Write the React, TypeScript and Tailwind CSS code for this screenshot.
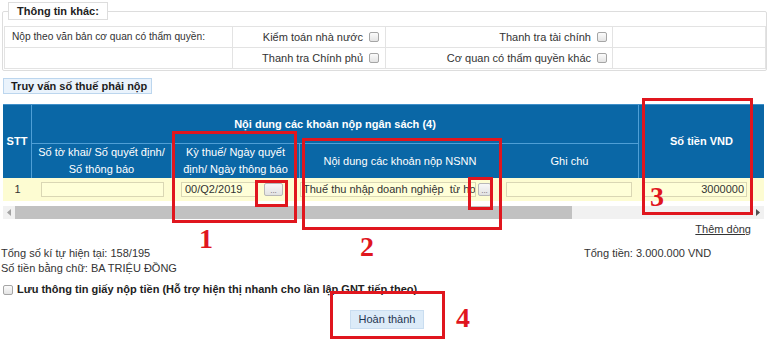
import React from 'react';

const Check = () => (
    <span className="inline-block w-[10px] h-[10px] shrink-0 rounded-[2px] border border-[#a5a5a5] bg-gradient-to-b from-[#fbfbfb] to-[#e4e4e4]" />
);

const DotsButton = ({ w }: { w: string }) => (
    <span className={`${w} h-[13px] shrink-0 rounded-[2px] border border-[#b8b8b8] bg-gradient-to-b from-[#f8f8f8] to-[#e2e2e2] flex items-end justify-center text-[8px] leading-[9px] text-[#666]`}>
        ...
    </span>
);

// annotation boxes drawn over the form
const RedBox = ({ className }: { className: string }) => (
    <div className={`absolute border-[3px] border-[#e0161e] ${className}`} />
);

const RedNum = ({ n, className }: { n: string; className: string }) => (
    <div className={`absolute font-['Liberation_Serif',serif] font-bold text-[28px] leading-none text-[#e0161e] ${className}`}>
        {n}
    </div>
);

export default function App() {
    return (
        <div className="relative w-[768px] h-[348px] overflow-hidden bg-white font-['Liberation_Sans',Arial,sans-serif] text-[11px] text-[#333]">
            {/* Thông tin khác */}
            <fieldset className="mt-[2px] mx-[2px] border border-[#dddddd] rounded-[2px] pb-[1px]">
                <legend className="ml-[5px] px-[8px] border border-[#dddddd] bg-white font-bold leading-[16px] text-[#222]">
                    Thông tin khác:
                </legend>
                <div className="mt-[6px] ml-[1px] grid grid-cols-[228px_153px_227px_153px] grid-rows-[21px_21px] border-t border-l border-[#e3e3e3]">
                    <div className="flex items-center pl-[7px] text-[10.2px] border-r border-b border-[#e3e3e3]">
                        Nộp theo văn bản cơ quan có thẩm quyền:
                    </div>
                    <div className="flex items-center justify-end gap-[6px] pr-[6px] border-r border-b border-[#e3e3e3]">
                        Kiểm toán nhà nước <Check />
                    </div>
                    <div className="flex items-center justify-end gap-[6px] pr-[5px] border-r border-b border-[#e3e3e3]">
                        Thanh tra tài chính <Check />
                    </div>
                    <div className="border-r border-b border-[#e3e3e3]" />
                    <div className="border-r border-b border-[#e3e3e3]" />
                    <div className="flex items-center justify-end gap-[6px] pr-[6px] border-r border-b border-[#e3e3e3]">
                        Thanh tra Chính phủ <Check />
                    </div>
                    <div className="flex items-center justify-end gap-[6px] pr-[5px] border-r border-b border-[#e3e3e3]">
                        Cơ quan có thẩm quyền khác <Check />
                    </div>
                    <div className="border-r border-b border-[#e3e3e3]" />
                </div>
            </fieldset>

            <button className="mt-[7px] ml-[3px] w-[149px] h-[16px] flex items-center pl-[7px] border border-[#bcd6ee] bg-[#eaf3fc] font-bold text-[#1c1c1c]">
                Truy vấn số thuế phải nộp
            </button>

            {/* Bảng khoản nộp */}
            <div className="mt-[10px] ml-[3px] w-[761px]">
                <div className="grid grid-cols-[29px_140px_128px_201px_138px_125px] grid-rows-[39px_34px] bg-[#0a67a6] text-white border-t border-[#3f8fc9]">
                    <div className="row-span-2 flex items-center justify-center font-bold border-r border-[#4f9fd6]">STT</div>
                    <div className="col-span-4 flex items-center justify-center font-bold border-r border-b border-[#4f9fd6]">
                        Nội dung các khoản nộp ngân sách (4)
                    </div>
                    <div className="row-span-2 flex items-center justify-center font-bold">Số tiền VND</div>
                    <div className="flex items-center justify-center text-center leading-[17px] border-r border-[#4f9fd6]">
                        Số tờ khai/ Số quyết định/<br />Số thông báo
                    </div>
                    <div className="flex items-center justify-center text-center leading-[17px] border-r border-[#4f9fd6]">
                        Kỳ thuế/ Ngày quyết<br />định/ Ngày thông báo
                    </div>
                    <div className="flex items-center justify-center border-r border-[#4f9fd6]">Nội dung các khoản nộp NSNN</div>
                    <div className="flex items-center justify-center border-r border-[#4f9fd6]">Ghi chú</div>
                </div>

                <div className="grid grid-cols-[29px_140px_128px_201px_138px_125px] h-[23px] bg-[#fdfcd2] items-center">
                    <div className="text-center">1</div>
                    <div className="pl-[9px]">
                        <div className="w-[123px] h-[15px] border border-[#dad7b4] bg-[#ffffd8]" />
                    </div>
                    <div className="flex items-center pl-[9px] gap-[7px]">
                        <div className="w-[76px] h-[15px] flex items-center pl-[3px] border border-[#dad7b4] bg-[#ffffd8]">00/Q2/2019</div>
                        <DotsButton w="w-[19px]" />
                    </div>
                    <div className="flex items-center gap-[2px]">
                        <div className="w-[176px] h-[15px] flex items-center overflow-hidden whitespace-pre border border-[#dad7b4] bg-[#ffffd8] pl-[2px]">
                            Thuế thu nhập doanh nghiệp  từ hoạt động sản xuất kinh doanh
                        </div>
                        <DotsButton w="w-[13px]" />
                    </div>
                    <div className="pl-[5px]">
                        <div className="w-[126px] h-[15px] border border-[#dad7b4] bg-[#ffffd8]" />
                    </div>
                    <div className="pl-[4px]">
                        <div className="w-[104px] h-[15px] flex items-center justify-end pr-[2px] border border-[#dad7b4] bg-[#ffffd8]">3000000</div>
                    </div>
                </div>

                {/* thanh cuộn ngang */}
                <div className="mt-[5px] h-[13px] flex bg-[#f1f1f1]">
                    <div className="w-[12px] flex items-center justify-center">
                        <svg width="4" height="7" viewBox="0 0 4 7"><path d="M4 0 L0 3.5 L4 7 Z" fill="#a3a3a3" /></svg>
                    </div>
                    <div className="w-[557px] bg-[#c1c1c1]" />
                    <div className="flex-1" />
                    <div className="w-[12px] flex items-center justify-center">
                        <svg width="4" height="7" viewBox="0 0 4 7"><path d="M0 0 L4 3.5 L0 7 Z" fill="#505050" /></svg>
                    </div>
                </div>

                <div className="mt-[3px] flex justify-end pr-[13px] leading-[14px]">
                    <span className="underline">Thêm dòng</span>
                </div>
            </div>

            <div className="mt-[10px] pl-[1px] flex leading-[15px]">
                <div className="w-[583px]">Tổng số kí tự hiện tại: 158/195</div>
                <div>Tổng tiền: 3.000.000 VND</div>
            </div>
            <div className="pl-[1px] leading-[15px]">Số tiền bằng chữ: BA TRIỆU ĐỒNG</div>

            <div className="mt-[6px] ml-[3px] flex items-center gap-[4px] leading-[15px] font-bold text-[#222]">
                <Check />
                Lưu thông tin giấy nộp tiền (Hỗ trợ hiện thị nhanh cho lần lập GNT tiếp theo)
            </div>

            <button className="mt-[13px] ml-[350px] w-[74px] h-[19px] flex items-center justify-center border border-[#c9ddf0] bg-[#dcebf8] text-[#1f3550]">
                Hoàn thành
            </button>

            <RedBox className="left-[172px] top-[131px] w-[125px] h-[92px]" />
            <RedBox className="left-[255px] top-[180px] w-[33px] h-[27px]" />
            <RedBox className="left-[302px] top-[138px] w-[200px] h-[92px]" />
            <RedBox className="left-[468px] top-[177px] w-[25px] h-[33px]" />
            <RedBox className="left-[642px] top-[98px] w-[111px] h-[117px]" />
            <RedBox className="left-[330px] top-[291px] w-[115px] h-[48px]" />
            <RedNum n="1" className="left-[199px] top-[225px]" />
            <RedNum n="2" className="left-[360px] top-[233px]" />
            <RedNum n="3" className="left-[650px] top-[183px]" />
            <RedNum n="4" className="left-[456px] top-[304px]" />
        </div>
    );
}
